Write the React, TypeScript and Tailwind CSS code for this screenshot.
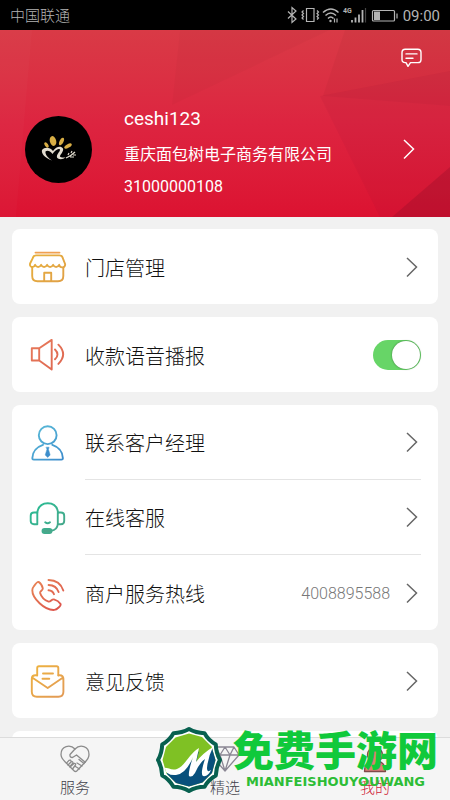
import { useState } from "react";
import type { ReactNode } from "react";

const sans = "font-['Roboto','Noto_Sans_CJK_SC',sans-serif]";

function Gradient({ id, from, to }: { id: string; from: string; to: string }) {
  return (
    <defs>
      <linearGradient id={id} gradientUnits="userSpaceOnUse" x1="4" y1="2" x2="32" y2="36">
        <stop offset="0" stopColor={from} />
        <stop offset="1" stopColor={to} />
      </linearGradient>
    </defs>
  );
}

function Icon({ id, from, to, children }: { id: string; from: string; to: string; children: ReactNode }) {
  return (
    <svg
      viewBox="0 0 38 38"
      className="h-[38px] w-[38px] shrink-0"
      fill="none"
      stroke={`url(#${id})`}
      strokeWidth="1.9"
      strokeLinecap="round"
      strokeLinejoin="round"
      aria-hidden="true"
    >
      <Gradient id={id} from={from} to={to} />
      {children}
    </svg>
  );
}

const StoreIcon = () => (
  <Icon id="store" from="#e8b13c" to="#e0a046">
    <path d="M6.500 4.600h24" stroke="#f0a050" />
    <path d="M7 7.400h23.500q2.600 0 3.200 2.500l2.400 6.100c.6 4-5 4.600-6 .8-1.500 3-4.500 3-6 0-1.500 3-4.500 3-6 0-1.500 3-4.500 3-6 0-1.500 3-4.500 3-6 0-1.200 3.600-6 2.600-5-1.300L3.900 9.900Q4.500 7.400 7 7.400z" />
    <path d="M3.200 19.500v8.500q0 5.300 5.300 5.300h20.500q5.300 0 5.300-5.300v-8.500M15.200 33v-8.200h7V33" />
  </Icon>
);

const SpeakerIcon = () => (
  <Icon id="speaker" from="#e87a5a" to="#dd6650">
    <path d="M2.800 12.200h7.400v12.300H2.800zM10.200 12.200l12.500-8.300v29.700l-12.500-9.100" />
    <path d="M26 13.500q5 5 0 9.800M29.400 8.700q9.500 9.700 0 19.200" />
  </Icon>
);

const ManagerIcon = () => (
  <Icon id="manager" from="#5bbcd8" to="#3d8dcc">
    <circle cx="18.700" cy="11.200" r="8.900" />
    <path d="M14 20.800C7.500 23 3.500 28 3.300 34.200q0 1.400 1.400 1.400h27.800q1.400 0 1.400-1.400C33.700 28 29.700 23 23.300 20.800" />
    <path d="M17.300 23.200h2.800l-.6 2.300 1.700 5.500-2.500 2.500-2.500-2.500 1.700-5.500z" fill="#3d8dcc" strokeWidth="0.500" />
  </Icon>
);

const HeadsetIcon = () => (
  <Icon id="headset" from="#27bd94" to="#4ba58a">
    <path d="M8.300 13.700v-.5Q10 4.200 18.800 4.200T29 13.200v.5" />
    <path d="M8.300 13.500v11.700H5q-3.300 0-3.300-3.200v-5.300q0-3.200 3.300-3.200zM28.800 13.500v11.700h3.100q3.300 0 3.300-3.200v-5.300q0-3.200-3.300-3.200zM28.800 25c-.4 4.700-2.700 6.300-6.500 6.700" />
    <path d="M16.200 23.300q2.400 2 4.800 0" />
    <rect x="13.500" y="30" width="9" height="4" rx="2" fill="#4ba58a" />
  </Icon>
);

const PhoneIcon = () => (
  <Icon id="phone" from="#e98a56" to="#dc514c">
    <path d="M4.700 12.500Q8.300 7.300 9.600 7.900q3.200 2 4.200 6.500c.1 2-3 2.800-2.700 4.500 1.200 4 4.500 7.200 8.500 8.700 2.200.5 2.900-2.600 5.300-2.200 3 .8 5.300 2.500 6.700 4.700.5 1.500-3.600 5.700-6.300 5.800C15.500 36.500 3.200 24 3.300 16.200q0-2 1.400-3.700z" />
    <path d="M19.500 16.200q4.200.3 5.500 4M19.600 11q7.800.3 10 7M19.500 6q11.500.3 14.800 10.500" />
  </Icon>
);

const MailIcon = () => (
  <Icon id="mail" from="#eeb33f" to="#e29a55">
    <path d="M8.200 13.500V6q0-1.700 1.700-1.700h17.700q1.700 0 1.700 1.700v7.500" />
    <path d="M8 13.300H6.500q-3.700 0-3.700 3.500v13q0 5 5 5h21.600q5 0 5-5v-13q0-3.500-3.700-3.500h-1.200M3.500 15.800 18.700 26l15-10.200M14 11.500h10M13.500 16.700h6.800" />
  </Icon>
);

function Chevron({ className = "text-[#666]" }: { className?: string }) {
  return (
    <svg viewBox="0 0 20 22" className={`h-[22px] w-5 shrink-0 ${className}`} fill="none" stroke="currentColor" strokeWidth="1.500" aria-hidden="true">
      <path d="M6 2l9.500 9L6 20.500" />
    </svg>
  );
}

function StatusBar() {
  return (
    <div className="flex h-[30px] shrink-0 items-center justify-between bg-black pr-2.5 pl-2.5 text-[15px] font-light text-[#b4b4b4]">
      <span className="pt-0.5">中国联通</span>
      <div className="flex items-center gap-1">
        <svg viewBox="0 0 116 18" className="h-[18px] w-[116px]" fill="none" stroke="#b4b4b4" strokeWidth="1.200" aria-hidden="true">
          <path d="M5 5.500l8 7.500-4 3.500V1.500l4 3.500-8 7.500" />
          <path d="M23.500 2.500H31v13h-7.500zM20.500 4.500L19 6l1.500 1.500L19 9l1.500 1.500L19 12l1.500 1.500M34 4.500L35.500 6 34 7.500 35.500 9 34 10.500l1.500 1.500-1.500 1.500" />
          <path d="M40 6.500q8-7 15.500 0M42.500 9.500q5.300-5 10.500 0M45 12.500q2.800-3 5.500 0" strokeWidth="1.500" />
          <circle cx="47.500" cy="15" r="1.200" fill="#b4b4b4" stroke="none" />
          <path d="M51.500 12.500v4M54 12.500v4" />
          <path d="M69 14v2.500M72.500 11.500v5M76 8.500v8M79.500 4v12.500" strokeWidth="1.800" />
          <path d="M82.500 2v14.500" stroke="#444" />
          <rect x="89.500" y="4.500" width="22" height="10.500" rx="1" />
          <path d="M114 7.500v5" />
          <rect x="91" y="5.500" width="6" height="8.500" fill="#b4b4b4" stroke="none" />
          <text x="60" y="7" fill="#b4b4b4" stroke="none" fontSize="7" fontWeight="700">4G</text>
        </svg>
        <span className="pt-0.5 font-normal">09:00</span>
      </div>
    </div>
  );
}

function Profile() {
  return (
    <header className="relative shrink-0 bg-linear-to-b from-[#d93a46] via-[#dd2440] to-[#dc1231] pt-[18px] pb-5 text-white">
      <svg viewBox="0 0 450 187" preserveAspectRatio="none" className="absolute inset-0 h-full w-full" aria-hidden="true">
        <path d="M0 0h32L16 187H0z" fill="#fff" opacity="0.020" />
        <path d="M180 0h150L172 75z" fill="#000" opacity="0.020" />
        <path d="M345 0h105v76L323 66z" fill="#000" opacity="0.030" />
        <path d="M450 41v146H380L320 66z" fill="#901030" opacity="0.080" />
        <path d="M450 137v50h-58z" fill="#900d28" opacity="0.300" />
      </svg>
      <div className="relative flex justify-end pr-7">
        <button aria-label="消息">
          <svg viewBox="0 0 21 20" className="h-5 w-[21px]" fill="none" stroke="#fff" strokeWidth="1.400" strokeLinejoin="round" strokeLinecap="round" aria-hidden="true">
            <path d="M4.200 1.200h12.600q3.200 0 3.200 3.200v7q0 3.200-3.200 3.200H9.500L7 18.300l-2-3.700h-.8Q1 14.600 1 11.400v-7q0-3.200 3.200-3.200zM5 5.900h11M5 10.200h7" />
          </svg>
        </button>
      </div>
      <button className="relative mt-[33px] flex w-full items-center pr-8 pl-[25px] text-left">
        <svg viewBox="0 0 67 67" className="h-[67px] w-[67px] shrink-0" aria-hidden="true">
          <circle cx="33.500" cy="33.500" r="33.500" fill="#000" />
          <g fill="#d8ae45">
            <ellipse cx="21.500" cy="29" rx="1.600" ry="3" transform="rotate(-35 21.500 29)" />
            <ellipse cx="28" cy="25" rx="3.200" ry="5" transform="rotate(-15 28 25)" />
            <ellipse cx="36.500" cy="25.500" rx="2" ry="4" transform="rotate(25 36.500 25.500)" />
            <ellipse cx="43" cy="30" rx="1.800" ry="4.200" transform="rotate(60 43 30)" />
          </g>
          <path
            d="M27 44.500C20 42 16 37.500 17 34c3-3.500 8-2.500 11 1 3-4.500 8-5.500 10-2.500 1 3-3 6-3 8 1 1.200 3 1.200 5.500.8-2 2.200-7 2.700-8.500.2-.8-3 3-5.500 3-8-2-1.500-5 1-7.500 4.500C25 34.500 22 34 20.500 35.500 20 38.500 23 42 27 44.500z"
            fill="#e2ddd0"
          />
          <path d="M41 42q5-2 9-6M43 39l1-2M46 37l1-2M45 41h4M48 39h3" fill="none" stroke="#e2ddd0" strokeWidth="1.200" />
        </svg>
        <span className="ml-8 flex grow flex-col">
          <span className="text-[19px] leading-9">ceshi123</span>
          <span className="mt-2 text-base leading-5">重庆面包树电子商务有限公司</span>
          <span className="mt-3 text-base leading-5">31000000108</span>
        </span>
        <Chevron className="text-white" />
      </button>
    </header>
  );
}

function Card({ children }: { children: ReactNode }) {
  return <section className="shrink-0 rounded-lg bg-white pr-[17px] pl-[17px]">{children}</section>;
}

function Row({ icon, label, value, divider }: { icon: ReactNode; label: string; value?: string; divider?: boolean }) {
  return (
    <button className="flex h-[75px] w-full items-center text-left">
      {icon}
      <span className={`ml-[18px] flex h-full grow items-center ${divider ? "border-b border-[#e4e4e4]" : ""}`}>
        <span className="grow pt-1 text-xl font-light text-[#111]">{label}</span>
        {value && <span className="mr-[11px] pt-0.5 text-base font-light text-[#777]">{value}</span>}
        <Chevron />
      </span>
    </button>
  );
}

function BroadcastRow() {
  const [on, setOn] = useState(true);
  return (
    <label className="flex h-[75px] items-center">
      <SpeakerIcon />
      <span className="ml-[18px] grow pt-1 text-xl font-light text-[#111]">收款语音播报</span>
      <input
        type="checkbox"
        role="switch"
        checked={on}
        onChange={(e) => setOn(e.target.checked)}
        className="flex h-[30px] w-12 appearance-none items-center rounded-full bg-gray-300 px-px before:h-7 before:w-7 before:rounded-full before:bg-white before:shadow-[0_0_2px_#0007] checked:justify-end checked:bg-[#67d567]"
      />
    </label>
  );
}

function TabBar() {
  return (
    <nav className="grid h-[63px] shrink-0 grid-cols-3 border-t border-[#dcdcdc] bg-[#f5f5f5] text-[15px] leading-5 font-light text-[#3f3f4a]">
      <a href="#service" className="flex flex-col items-center gap-[5px] pt-[7px]">
        <svg viewBox="0 0 30 28" className="h-7 w-[30px]" fill="none" stroke="#8b8b8b" strokeWidth="1.300" strokeLinecap="round" strokeLinejoin="round" aria-hidden="true">
          <path d="M15 4C10-1 1 1 1 9.500c0 3 2 5.200 4 7.200l9 9q1.500 1.500 3 0l8-8.500c2.500-2.500 4-4.700 4-7.700C29 1 20-1 15 4z" />
          <path d="M15 4l-5 5.500q-.5 3 2.500 3l4-2.500 8.700 7.300M8 20l3-3q2-1 2 1l-3 3.500M10 22l4-3.500q2-.5 1.500 1.500L12.500 24M6.500 18.200 9 15.300q2-.8 2 1M17 18l5 3M15.500 21.500l4 2.500M19 14.500l5 4" />
        </svg>
        服务
      </a>
      <a href="#featured" className="flex flex-col items-center gap-[5px] pt-[7px]">
        <svg viewBox="0 0 30 28" className="h-7 w-[30px]" fill="none" stroke="#8b8794" strokeWidth="1.300" strokeLinejoin="round" aria-hidden="true">
          <path d="M6 2h18l5 8-14 16L1 10zM1 10h28M6 2l4 8 5-8 5 8 4-8M10 10l5 16 5-16" />
        </svg>
        精选
      </a>
      <a href="#mine" aria-current="page" className="flex flex-col items-center gap-[5px] pt-[7px] text-[#cf2338]">
        <svg viewBox="0 0 30 28" className="h-7 w-[30px]" fill="#dc7d78" stroke="#81494b" strokeWidth="1.300" strokeLinejoin="round" aria-hidden="true">
          <path d="M4.500 26.500q0-8 6.500-10.300a7.500 7.500 0 1 1 8 0q6.500 2.300 6.500 10.300z" />
        </svg>
        我的
      </a>
    </nav>
  );
}

function Watermark() {
  return (
    <div className="pointer-events-none absolute right-3 bottom-1.5 flex items-center gap-2.5">
      <svg viewBox="0 0 68 68" className="h-[68px] w-[68px] shrink-0" aria-hidden="true">
        <defs>
          <clipPath id="badge">
            <path d="M60.500 34 57 47 47.500 56.500 34 60.500 21 57 11.500 47.500 7.500 34 11 21 20.500 11.500 34 7.500 47 11 56.500 20.500z" />
          </clipPath>
        </defs>
        <path
          d="M65 34Q61 41 60.800 49.500 53 54 49.500 60.800 41 61 34 65 27 61 18.500 60.800 14 53 7.200 49.500 7 41 3 34 7 27 7.200 18.500 15 14 18.500 7.200 27 7 34 3 41 7 49.500 7.200 53 14 60.800 18.500 61 27 65 34z"
          fill="#fff"
          stroke="#07604f"
          strokeWidth="4"
          strokeLinejoin="round"
        />
        <g clipPath="url(#badge)">
          <path d="M0 0h68v68H0z" fill="#7fc124" />
          <path d="M12 47c10 0 18-3 24-12l8-10-3 12 20-18v49H8z" fill="#08507c" />
          <path
            d="M8 42c5-1 8 3 14 1 8-3 11-14 22-21l-3 14q7-9 17-15-5 10-6 21 0 5 4 2-3 7-8 6-3-2 2-17-5 3-10 14-3 5-6 3-1-4 4-19-7 17-17 18-9 1-13-7z"
            fill="#fff"
          />
        </g>
      </svg>
      <div className="flex flex-col items-center">
        <span className="text-[41px] leading-[44px] font-black text-[#10c93b]">免费手游网</span>
        <span className="font-['DejaVu_Sans',sans-serif] text-[13px] leading-4 font-bold text-[#2dbd36]">MIANFEISHOUYOUWANG</span>
      </div>
    </div>
  );
}

export default function App() {
  return (
    <div className={`relative flex h-screen flex-col overflow-hidden bg-[#f1f1f1] ${sans}`}>
      <StatusBar />
      <Profile />
      <main className="flex min-h-0 flex-1 flex-col gap-[13px] overflow-hidden px-3 pt-3">
        <Card>
          <Row icon={<StoreIcon />} label="门店管理" />
        </Card>
        <Card>
          <BroadcastRow />
        </Card>
        <Card>
          <Row icon={<ManagerIcon />} label="联系客户经理" divider />
          <Row icon={<HeadsetIcon />} label="在线客服" divider />
          <Row icon={<PhoneIcon />} label="商户服务热线" value="4008895588" />
        </Card>
        <Card>
          <Row icon={<MailIcon />} label="意见反馈" />
        </Card>
        <div className="h-[75px] shrink-0 rounded-lg bg-white" />
      </main>
      <TabBar />
      <Watermark />
    </div>
  );
}
